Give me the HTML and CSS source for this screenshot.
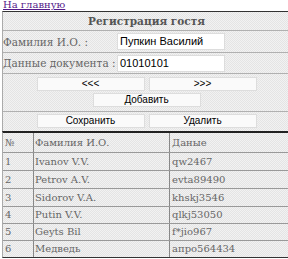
FILE: index.html
```
<!DOCTYPE html>
<html>
<head>
<meta charset="utf-8">
<link rel="stylesheet" href="styles.css">
</head>
<body>
<a class="home" href="#">На главную</a>
<div class="panel">
  <div class="title">Регистрация гостя</div>
  <div class="field">
    <span class="label">Фамилия И.О. :</span>
    <span class="input">Пупкин Василий</span>
  </div>
  <div class="field second">
    <span class="label">Данные документа :</span>
    <span class="input">01010101</span>
  </div>
  <div class="buttons">
    <div class="pair">
      <span class="btn">&lt;&lt;&lt;</span>
      <span class="btn">&gt;&gt;&gt;</span>
    </div>
    <div class="single">
      <span class="btn">Добавить</span>
    </div>
  </div>
  <div class="buttons last">
    <div class="pair">
      <span class="btn">Сохранить</span>
      <span class="btn">Удалить</span>
    </div>
  </div>
</div>
<div class="list">
  <div class="lrow head"><span>№</span><span>Фамилия И.О.</span><span>Даные</span></div>
  <div class="lrow"><span>1</span><span>Ivanov V.V.</span><span>qw2467</span></div>
  <div class="lrow"><span>2</span><span>Petrov A.V.</span><span>evta89490</span></div>
  <div class="lrow"><span>3</span><span>Sidorov V.A.</span><span>khskj3546</span></div>
  <div class="lrow short"><span>4</span><span>Putin V.V.</span><span>qlkj53050</span></div>
  <div class="lrow short"><span>5</span><span>Geyts Bil</span><span>f*jio967</span></div>
  <div class="lrow short"><span>6</span><span>Медведь</span><span>апро564434</span></div>
</div>
</body>
</html>
```
FILE: styles.css
```
html, body {
  margin: 0;
  padding: 0;
  background: #fff;
}
body {
  padding-left: 2px;
  width: 290px;
  font-family: "DejaVu Serif", "Liberation Serif", serif;
  font-size: 10px;
  color: #666;
}
.home {
  display: block;
  margin-left: 1px;
  height: 11px;
  line-height: 10px;
  font-size: 10px;
  color: #551a8b;
  text-decoration: underline;
}
.panel {
  width: 287px;
  border-top: 1px solid #333;
  border-left: 1px solid #aaa;
  background-color: #ececec;
  background-image: repeating-conic-gradient(#e4e4e4 0 25%, #f2f2f2 0 50%);
  background-size: 2px 2px;
}
.title {
  height: 18px;
  line-height: 18px;
  text-align: center;
  font-weight: bold;
  font-size: 10.5px;
  color: #555;
  border-bottom: 1px solid #b0b0b0;
}
.field {
  display: grid;
  grid-template-columns: 114px 108px;
  align-items: center;
  height: 21px;
  border-bottom: 1px solid #b0b0b0;
}
.field.second {
  height: 20px;
}
.label {
  font-size: 10.5px;
}
.input {
  height: 15px;
  line-height: 15px;
  background: #fff;
  border: 1px solid #ddd;
  font-family: "Liberation Sans", Arial, sans-serif;
  font-size: 11px;
  color: #000;
  padding-left: 2px;
}
.buttons {
  display: flex;
  flex-direction: column;
  align-items: center;
  gap: 2px;
  padding: 3px 0 4px;
  border-bottom: 1px solid #b0b0b0;
}
.buttons.last {
  border-bottom: none;
  padding: 2px 0 3px;
}
.pair {
  display: flex;
  gap: 4px;
}
.btn {
  display: block;
  width: 106px;
  height: 12px;
  line-height: 12px;
  background: #fafafa;
  border: 1px solid #ddd;
  text-align: center;
  font-family: "Liberation Sans", Arial, sans-serif;
  font-size: 10px;
  color: #000;
}
.list {
  width: 287px;
  border-top: 2px solid #222;
  border-left: 1px solid #aaa;
  border-bottom: 1px solid #333;
  background-color: #ececec;
  background-image: repeating-conic-gradient(#e4e4e4 0 25%, #f2f2f2 0 50%);
  background-size: 2px 2px;
}
.lrow {
  display: grid;
  grid-template-columns: 31px 136px 1fr;
  height: 17px;
  line-height: 17px;
  border-bottom: 1px solid #999;
}
.lrow.head {
  height: 19px;
  line-height: 19px;
}
.lrow.short {
  height: 16px;
  line-height: 16px;
}
.lrow:last-child {
  border-bottom: none;
}
.lrow span {
  padding-left: 2px;
  border-right: 1px solid #888;
  font-size: 10px;
}
.lrow span:nth-child(2) {
  padding-left: 1px;
}
.lrow span:last-child {
  border-right: none;
}
```
